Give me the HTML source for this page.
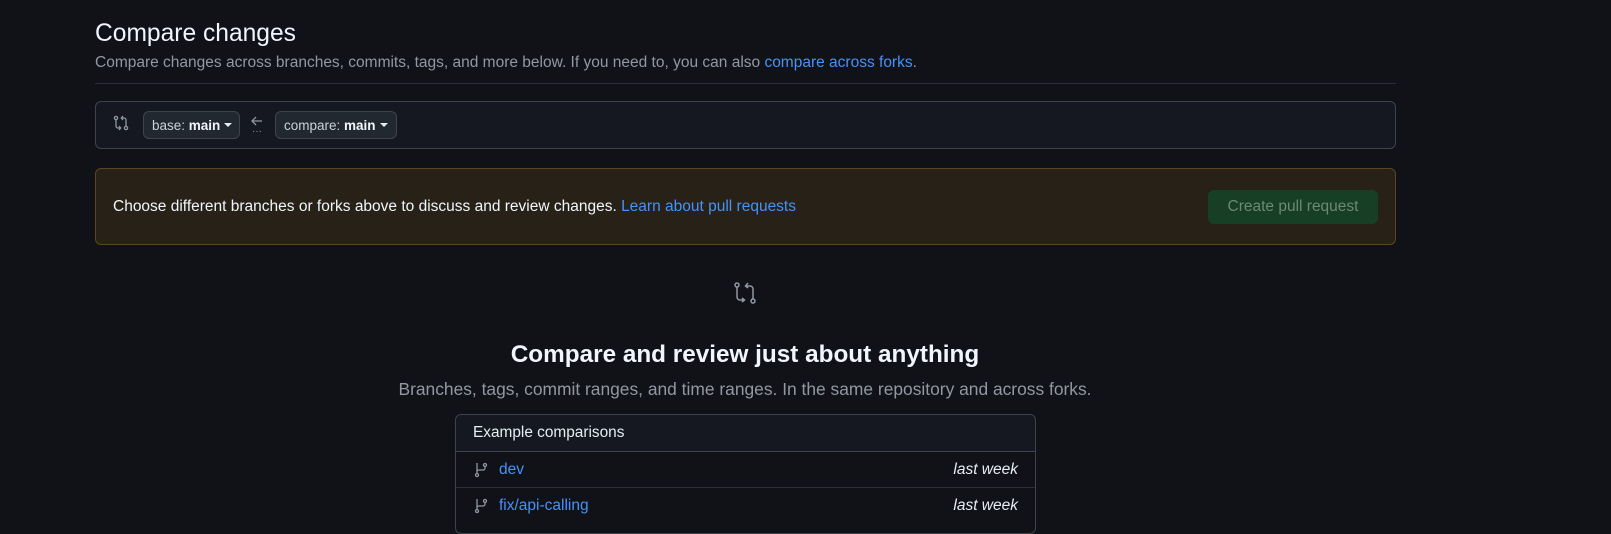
<!DOCTYPE html><html><head><style>
body{margin:0;background:#111217;font-family:"Liberation Sans",sans-serif;color:#e6edf3;width:1611px;height:519px;overflow:hidden;position:relative}
.a{position:absolute}
a{color:#4493f8;text-decoration:none}
.btn{position:absolute;top:111px;height:28px;border:1px solid #3d444d;border-radius:6px;background:#212830;font-size:13.5px;color:#c9d1d9;line-height:27px;padding:0 8px;box-sizing:border-box;white-space:nowrap}
.btn b{color:#f0f6fc}
.car{display:inline-block;border-left:4px solid transparent;border-right:4px solid transparent;border-top:4px solid #e6edf3;vertical-align:middle;margin-left:4px;margin-top:-3px}
.row{height:35px;line-height:35px;font-size:15.5px;padding:0 17px;position:relative}
.row svg{position:absolute;left:17px;top:10px}
</style></head><body>
<div class="a" style="left:95px;top:20px;font-size:24.6px;color:#f0f6fc">Compare changes</div>
<div class="a" style="left:95px;top:54px;font-size:15.5px;color:#9198a1">Compare changes across branches, commits, tags, and more below. If you need to, you can also <a>compare across forks</a>.</div>
<div class="a" style="left:95px;top:83px;width:1301px;height:1px;background:#2a2f37"></div>
<div class="a" style="left:95px;top:101px;width:1301px;height:48px;box-sizing:border-box;border:1px solid #3d444d;border-radius:6px;background:#151820"></div>
<svg class="a" style="left:113px;top:115px" width="16" height="16" viewBox="0 0 16 16" fill="none" stroke="#9198a1" stroke-width="1.3"><circle cx="3" cy="3" r="1.6"/><circle cx="13" cy="13" r="1.6"/><path d="M3 4.6V11a2 2 0 0 0 2 2h2.5M6 11l1.7 2L6 15M13 11.4V5a2 2 0 0 0-2-2H8.5M10 1 8.3 3 10 5"/></svg>
<div class="btn" style="left:143px;width:97px">base: <b>main</b><span class="car"></span></div>
<svg class="a" style="left:250px;top:115px" width="14" height="12" viewBox="0 0 14 12" fill="none" stroke="#9198a1" stroke-width="1.3"><path d="M12 6H2M6 2 2 6l4 4"/></svg>
<div class="a" style="left:252px;top:126px;font-size:10px;color:#9198a1">···</div>
<div class="btn" style="left:275px;width:122px">compare: <b>main</b><span class="car"></span></div>
<div class="a" style="left:95px;top:168px;width:1301px;height:77px;box-sizing:border-box;border:1px solid #5c4620;border-radius:6px;background:#282117"></div>
<div class="a" style="left:113px;top:198px;font-size:15.5px;color:#f0f6fc">Choose different branches or forks above to discuss and review changes. <a>Learn about pull requests</a></div>
<div class="a" style="left:1208px;top:190px;width:170px;height:34px;border-radius:6px;background:#163f25;color:#6a8a73;font-size:15.5px;line-height:34px;text-align:center">Create pull request</div>
<svg class="a" style="left:733px;top:281px" width="24" height="24" viewBox="0 0 24 24" fill="none" stroke="#9198a1" stroke-width="1.5"><circle cx="4" cy="4" r="2"/><circle cx="20" cy="20" r="2"/><path d="M4 6v10a3 3 0 0 0 3 3h4M9 17l2.5 2L9 21M20 18V8a3 3 0 0 0-3-3h-4M15 2 12.5 5 15 7"/></svg>
<div class="a" style="left:0;width:1490px;top:341px;text-align:center;font-size:24.3px;font-weight:bold;color:#f0f6fc">Compare and review just about anything</div>
<div class="a" style="left:0;width:1490px;top:379px;text-align:center;font-size:17.4px;color:#9198a1">Branches, tags, commit ranges, and time ranges. In the same repository and across forks.</div>
<div class="a" style="left:455px;top:414px;width:581px;height:120px;box-sizing:border-box;border:1px solid #3d444d;border-radius:6px;overflow:hidden">
<div style="height:36px;background:#151820;border-bottom:1px solid #3d444d;font-size:15.4px;line-height:36px;padding-left:17px">Example comparisons</div>
<div class="row" style="border-bottom:1px solid #2a2f37"><svg width="16" height="16" viewBox="0 0 16 16" fill="none" stroke="#9198a1" stroke-width="1.3"><circle cx="4" cy="13" r="1.5"/><circle cx="12" cy="3" r="1.5"/><path d="M4 1v10.5M12 4.5V6a2 2 0 0 1-2 2H6a2 2 0 0 0-2 2"/></svg><a style="margin-left:26px">dev</a><i style="position:absolute;right:17px">last week</i></div>
<div class="row"><svg width="16" height="16" viewBox="0 0 16 16" fill="none" stroke="#9198a1" stroke-width="1.3"><circle cx="4" cy="13" r="1.5"/><circle cx="12" cy="3" r="1.5"/><path d="M4 1v10.5M12 4.5V6a2 2 0 0 1-2 2H6a2 2 0 0 0-2 2"/></svg><a style="margin-left:26px">fix/api-calling</a><i style="position:absolute;right:17px">last week</i></div>
</div>
</body></html>
